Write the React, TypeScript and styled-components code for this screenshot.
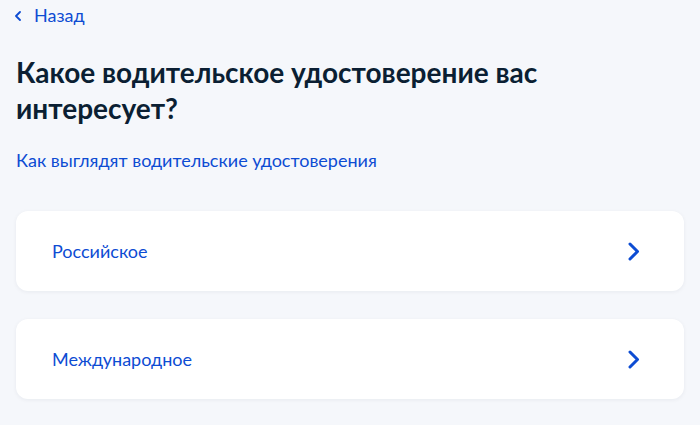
import React from "react";
import styled, { createGlobalStyle } from "styled-components";

const Global = createGlobalStyle`
  html, body {
    margin: 0;
    padding: 0;
    background: #f5f7fb;
  }
  body {
    font-family: Lato, "Noto Sans", sans-serif;
    -webkit-font-smoothing: antialiased;
  }
`;

const Page = styled.div`
  width: 700px;
  min-height: 425px;
  box-sizing: border-box;
  padding: 3px 16px 0;
  display: flex;
  flex-direction: column;
`;

const BackLink = styled.a`
  display: inline-flex;
  align-items: center;
  gap: 13px;
  align-self: flex-start;
  font-size: 18px;
  line-height: 24px;
  color: #0d4cd3;
  text-decoration: none;
  cursor: pointer;
`;

const BackIcon = styled.svg`
  width: 6px;
  height: 10px;
  margin-left: -1px;
  margin-top: 1px;
`;

const Title = styled.h1`
  margin: 27px 0 0;
  font-size: 28px;
  line-height: 36px;
  font-weight: 700;
  color: #0b1f33;
  max-width: 540px;
`;

const InfoLink = styled.a`
  margin-top: 22px;
  align-self: flex-start;
  font-size: 18px;
  line-height: 24px;
  color: #0d4cd3;
  text-decoration: none;
  cursor: pointer;
`;

const Options = styled.div`
  margin-top: 39px;
  display: flex;
  flex-direction: column;
  gap: 28px;
`;

const OptionCard = styled.button`
  display: flex;
  align-items: center;
  justify-content: space-between;
  height: 80px;
  box-sizing: border-box;
  padding: 0 44px 0 36px;
  border: none;
  border-radius: 12px;
  background: #ffffff;
  box-shadow: 0 1px 4px rgba(11, 31, 51, 0.06);
  font-family: inherit;
  font-size: 18px;
  line-height: 24px;
  color: #0d4cd3;
  text-align: left;
  cursor: pointer;
`;

const Chevron = styled.svg`
  width: 12px;
  height: 19px;
  flex: none;
`;

const ChevronRight = () => (
  <Chevron viewBox="0 0 12 19" fill="none">
    <path
      d="M2 2 L9.5 9.5 L2 17"
      stroke="#0d4cd3"
      strokeWidth="3"
      strokeLinecap="round"
      strokeLinejoin="round"
    />
  </Chevron>
);

const options = ["Российское", "Международное"];

export default function App() {
  return (
    <>
      <Global />
      <Page>
        <BackLink>
          <BackIcon viewBox="0 0 6 10" fill="none">
            <path
              d="M5 1 L1 5 L5 9"
              stroke="#0d4cd3"
              strokeWidth="1.8"
              strokeLinecap="round"
              strokeLinejoin="round"
            />
          </BackIcon>
          Назад
        </BackLink>
        <Title>Какое водительское удостоверение вас интересует?</Title>
        <InfoLink>Как выглядят водительские удостоверения</InfoLink>
        <Options>
          {options.map((o) => (
            <OptionCard key={o}>
              {o}
              <ChevronRight />
            </OptionCard>
          ))}
        </Options>
      </Page>
    </>
  );
}
